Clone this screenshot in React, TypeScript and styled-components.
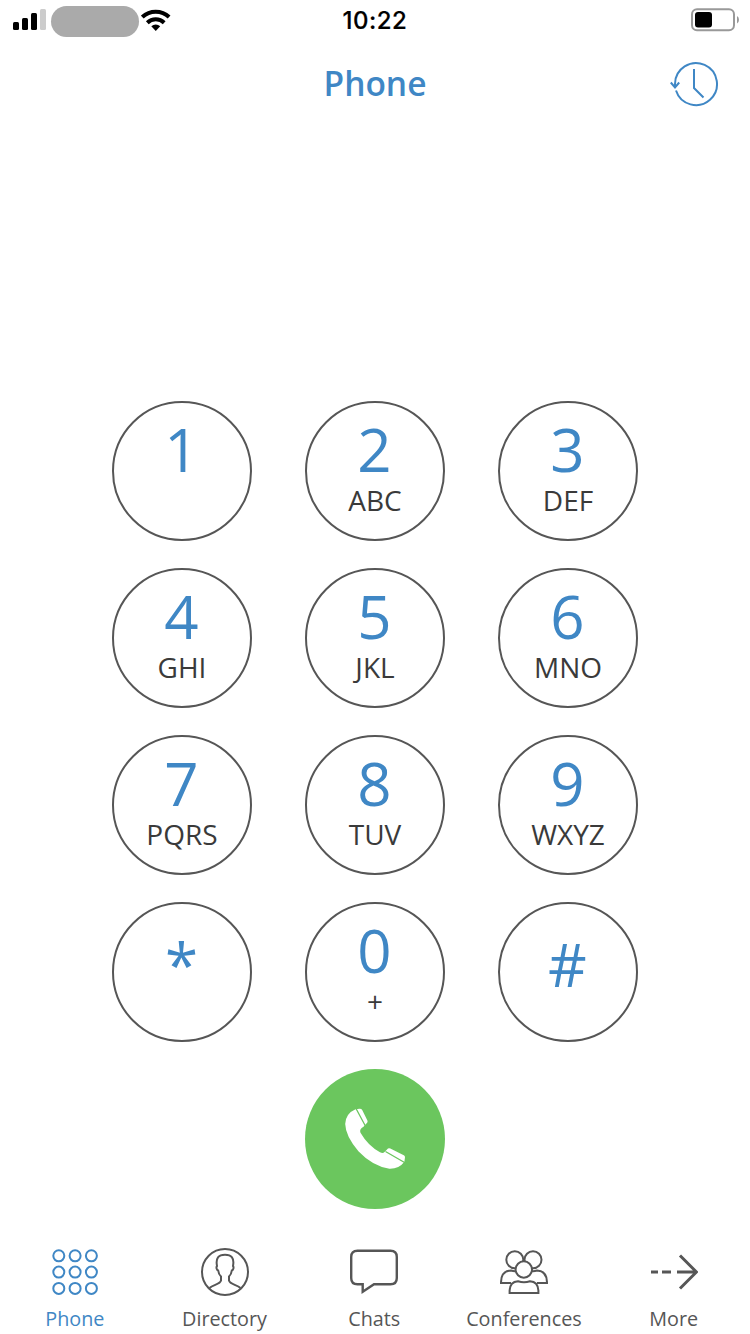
import React from "react";
import styled, { createGlobalStyle } from "styled-components";

const BLUE = "#3f87c5";
const DARK = "#565656";

const GlobalStyle = createGlobalStyle`
  body { margin: 0; background: #fff; }
  * { box-sizing: border-box; }
  button { border: 0; padding: 0; margin: 0; background: none; font: inherit; color: inherit; }
`;

const Screen = styled.div`
  width: 750px;
  height: 1334px;
  display: flex;
  flex-direction: column;
  overflow: hidden;
  background: #fff;
  font-family: "Open Sans", "Noto Sans", sans-serif;
`;

const StatusBar = styled.div`
  height: 40px;
  flex: none;
  display: grid;
  grid-template-columns: 1fr auto 1fr;
  align-items: center;
`;

const Signals = styled.div`
  display: flex;
  align-items: center;
  padding-left: 12px;
  height: 40px;
`;

const Carrier = styled.div`
  width: 88px;
  height: 31px;
  margin: 3px 2px 0 4px;
  border-radius: 16px;
  background: #aaa;
`;

const Clock = styled.div`
  height: 40px;
  padding-top: 1px;
  font: 500 24px/40px Inter, sans-serif;
  letter-spacing: 0.5px;
  color: #000;
  -webkit-text-stroke: 0.2px #000;
`;

const BatteryHolder = styled.div`
  display: flex;
  justify-content: flex-end;
  padding-right: 10px;
`;

const Header = styled.header`
  height: 88px;
  flex: none;
  display: grid;
  grid-template-columns: 1fr auto 1fr;
  align-items: center;
`;

const Title = styled.h1`
  grid-column: 2;
  margin: 0;
  font-size: 33.5px;
  font-weight: 600;
  line-height: 86px;
  height: 88px;
  color: ${BLUE};
`;

const HistoryButton = styled.button`
  justify-self: end;
  width: 50px;
  height: 48px;
  margin-right: 30px;
`;

const Keypad = styled.main`
  flex: none;
  margin-top: 273px;
  display: grid;
  grid-template-columns: repeat(3, 140px);
  grid-auto-rows: 140px;
  gap: 27px 53px;
  justify-content: center;
`;

const Key = styled.button<{ $symbol?: boolean }>`
  border: 2px solid ${DARK};
  border-radius: 50%;
  display: flex;
  flex-direction: column;
  align-items: center;
  justify-content: flex-start;
  padding-top: ${(p) => (p.$symbol ? 30 : 16)}px;
`;

const Digit = styled.span`
  padding-right: 1px;
  font-size: 60px;
  line-height: 60px;
  color: ${BLUE};
`;

const Letters = styled.span`
  margin-top: 7px;
  font-size: 28px;
  line-height: 28px;
  color: #3a3a3a;
`;

const CallButton = styled.button`
  grid-column: 2;
  display: grid;
  border-radius: 50%;
  background: #6bc65e;
`;

const TabBar = styled.nav`
  margin-top: auto;
  height: 98px;
  flex: none;
  display: grid;
  grid-template-columns: repeat(5, 1fr);
  padding-right: 1.5px;
`;

const Tab = styled.button<{ $active?: boolean }>`
  display: flex;
  flex-direction: column;
  align-items: center;
  padding-top: 12px;
  color: ${(p) => (p.$active ? BLUE : DARK)};
`;

const TabLabel = styled.span`
  margin-top: 8px;
  font-size: 19.8px;
  line-height: 30px;
`;

const Icon = styled.svg`
  display: block;
  flex: none;
  fill: none;
  stroke: currentColor;
`;

const SignalIcon = () => (
  <Icon width="35" height="24" viewBox="0 0 35 24" stroke="none">
    <g fill="#000" stroke="none">
      <rect x="1" y="14" width="6" height="8" rx="1.5" />
      <rect x="10" y="10" width="6" height="12" rx="1.5" />
      <rect x="19" y="5" width="6" height="17" rx="1.5" />
      <rect x="28" y="1" width="6" height="21" rx="1.5" fill="#ccc" />
    </g>
  </Icon>
);

const WifiIcon = () => (
  <Icon width="30" height="24" viewBox="0 0 30 24">
    <g stroke="#000" strokeWidth="4">
      <path d="M1.300 9a19.500 19.500 0 0 1 26.800 0" />
      <path d="M6.300 14.700a12.300 12.300 0 0 1 16.900 0" />
      <path d="M10.300 18.200a6.500 6.500 0 0 1 8.900 0L14.750 22.900z" fill="#000" stroke="none" />
    </g>
  </Icon>
);

const BatteryIcon = () => (
  <Icon width="50" height="24" viewBox="0 0 50 24">
    <rect x="2" y="1.200" width="42" height="21" rx="5" stroke="#999" strokeWidth="2" />
    <rect x="5" y="4" width="17" height="15.500" rx="3" fill="#000" stroke="none" />
    <path d="M47 8q2 1 2 3.700t-2 3.700z" fill="#999" stroke="none" />
  </Icon>
);

const HistoryIcon = () => (
  <Icon width="50" height="48" viewBox="0 0 50 48" color={BLUE} strokeWidth="2">
    <path d="M5 27V24A21 21 0 1 1 6 30.500M.8 22.500 5 27.500 9.200 22.500" />
    <path d="M24 9v19l9.500 9.500" />
  </Icon>
);

const HandsetIcon = () => (
  <Icon width="140" height="140" viewBox="0 0 140 140">
    <path
      d="M50.500 40.200 54.500 39.800q1.800-.2 2.700 1.200l5.200 10.500q.6 1.500-.5 2.500l-3.400 3.700q-4.500 2.500-3 6 7.500 13 19.500 19.500 3 1.500 4.500-.3l3.500-3.300q1-.8 2.300-.2l13.500 6.800q1.200.7 1.200 2l-.6 4.500q-5.500 7.300-15 7-17-2.700-31-17.500Q40.500 67 40.200 55 40.500 44.500 50.500 40.200z"
      fill="#fff"
      stroke="none"
    />
    <path d="M51 39.500 62 60M80.500 82.500 103 95.500" stroke="#6bc65e" strokeWidth="1.300" />
  </Icon>
);

const DialpadIcon = () => (
  <Icon width="48" height="48" viewBox="0 0 48 48" strokeWidth="2">
    {[7.800, 24.100, 40.400].map((y) =>
      [7.800, 24.100, 40.400].map((x) => <circle key={`${x}-${y}`} cx={x} cy={y} r="5.500" />)
    )}
  </Icon>
);

const PersonIcon = () => (
  <Icon width="48" height="48" viewBox="0 0 48 48" strokeWidth="2">
    <circle cx="24" cy="24" r="23" />
    <path d="M8.500 40c3.500-3.500 10.500-3.500 11.500-7.500v-4c-1.800-1.500-2.500-3.500-2.800-6-1.900-.5-2.100-3.500-1.200-4.500-1.500-8 1.500-11.300 8-11.300s9.500 3.300 8 11.300c.9 1 .7 4-1.200 4.500-.3 2.500-1 4.500-2.800 6v4c1 4 8 4 11.500 7.500" />
  </Icon>
);

const ChatIcon = () => (
  <Icon width="48" height="48" viewBox="0 0 48 48" strokeWidth="2.400">
    <path d="M7.500 2.800h33q6.300 0 6.300 6.300v20.800q0 6.300-6.300 6.300H24L12.700 43.800v-7.600H7.500q-6.300 0-6.300-6.300V9.100q0-6.300 6.300-6.300z" />
  </Icon>
);

const GroupIcon = () => (
  <Icon width="48" height="48" viewBox="0 0 48 48" strokeWidth="2">
    <circle cx="14.800" cy="11.700" r="8.500" />
    <circle cx="33" cy="11.700" r="8.500" />
    <path d="M11 34.900H1Q.8 23 11 22.500q2.500.8 5 .6M37 34.900H47Q47.200 23 37 22.500q-2.500.8-5 .6" />
    <circle cx="23.800" cy="21.500" r="8.200" fill="#fff" />
    <path d="M9.600 44.900V42.500q.4-8.800 8.400-9.300 6 2 12 0 8 .5 8.400 9.300v2.400z" fill="#fff" />
  </Icon>
);

const MoreIcon = () => (
  <Icon width="48" height="48" viewBox="0 0 48 48" strokeWidth="3">
    <path d="M1 24h7M12 24h9M27 24h19M30 7.500 46.500 24 30 40.500" />
  </Icon>
);

const keys = [
  ["1", ""], ["2", "ABC"], ["3", "DEF"],
  ["4", "GHI"], ["5", "JKL"], ["6", "MNO"],
  ["7", "PQRS"], ["8", "TUV"], ["9", "WXYZ"],
  ["*", ""], ["0", "+"], ["#", ""],
];

const tabs = [
  { label: "Phone", Glyph: DialpadIcon },
  { label: "Directory", Glyph: PersonIcon },
  { label: "Chats", Glyph: ChatIcon },
  { label: "Conferences", Glyph: GroupIcon },
  { label: "More", Glyph: MoreIcon },
];

export default function App() {
  return (
    <>
      <GlobalStyle />
      <Screen>
        <StatusBar>
          <Signals>
            <SignalIcon />
            <Carrier />
            <WifiIcon />
          </Signals>
          <Clock>10:22</Clock>
          <BatteryHolder>
            <BatteryIcon />
          </BatteryHolder>
        </StatusBar>
        <Header>
          <Title>Phone</Title>
          <HistoryButton aria-label="Call history">
            <HistoryIcon />
          </HistoryButton>
        </Header>
        <Keypad>
          {keys.map(([digit, letters]) => (
            <Key key={digit} $symbol={digit === "*" || digit === "#"}>
              <Digit>{digit}</Digit>
              {letters && <Letters>{letters}</Letters>}
            </Key>
          ))}
          <CallButton aria-label="Call">
            <HandsetIcon />
          </CallButton>
        </Keypad>
        <TabBar>
          {tabs.map(({ label, Glyph }, i) => (
            <Tab key={label} $active={i === 0}>
              <Glyph />
              <TabLabel>{label}</TabLabel>
            </Tab>
          ))}
        </TabBar>
      </Screen>
    </>
  );
}
